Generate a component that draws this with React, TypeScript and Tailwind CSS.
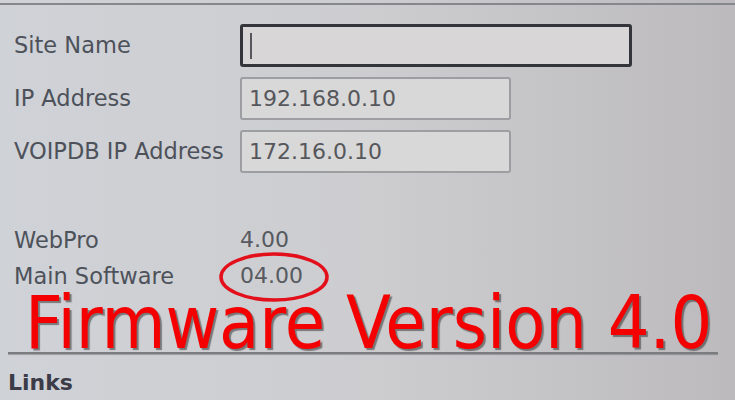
import React from "react";

const Field = ({ label, value, active }: { label: string; value?: string; active?: boolean }) => {
  return (
    <div className="flex flex-row items-center">
      <div className="w-[240px] pl-[14px] text-[22.5px] text-[#4d515a]">{label}</div>
      <div
        className={
          active
            ? "flex h-[43px] w-[392px] items-center rounded-[3px] border-[3px] border-[#34353a] bg-[#d8d6d6] pl-[7px]"
            : "flex h-[43px] w-[271px] items-center rounded-[3px] border-2 border-[#9d9ea2] bg-[#d9d8d8] pl-[7px] text-[22px] text-[#55575c]"
        }
      >
        {active ? <div className="h-[26px] w-[2px] bg-[#55575c]" /> : value}
      </div>
    </div>
  );
};

const App = () => {
  return (
    <div className="relative h-[400px] w-[735px] overflow-hidden bg-gradient-to-r from-[#cfd2d7] via-[#cdcdd0] to-[#bcbabc] pt-[3px] font-['DejaVu_Sans',sans-serif]">
      <div className="border-t-2 border-[#86878b]">
        {/* form */}
        <div className="flex flex-col gap-[10px] pt-[19px]">
          <Field label="Site Name" active />
          <Field label="IP Address" value="192.168.0.10" />
          <Field label="VOIPDB IP Address" value="172.16.0.10" />
        </div>

        {/* versions */}
        <div className="mt-[49px] flex flex-col text-[22.5px] leading-[36px]">
          <div className="flex flex-row">
            <div className="w-[240px] pl-[14px] text-[#4d515a]">WebPro</div>
            <div className="text-[22px] text-[#575a60]">4.00</div>
          </div>
          <div className="flex flex-row">
            <div className="w-[240px] pl-[14px] text-[#4d515a]">Main Software</div>
            <div className="text-[22px] text-[#575a60]">04.00</div>
          </div>
        </div>

        <div className="pl-[25px] font-['DejaVu_Sans_Condensed','DejaVu_Sans',sans-serif] text-[73px] leading-[58px] text-[#f40000] font-stretch-condensed [text-shadow:2px_2px_1px_rgba(60,60,60,0.6)]">
          Firmware Version 4.0
        </div>

        <div className="ml-[8px] h-[2px] w-[710px] bg-[#7b7c80] shadow-[0_1px_1px_rgba(0,0,0,0.25)]" />

        <div className="mt-[16px] pl-[8px] text-[22px] font-bold leading-[26px] text-[#3b3c48]">
          Links
        </div>
      </div>

      {/* red annotation circle */}
      <svg className="absolute left-[218px] top-[251px]" width="112" height="52" viewBox="0 0 112 52">
        <ellipse cx="56" cy="26" rx="53" ry="23" fill="none" stroke="#e3101c" strokeWidth="3.5" />
      </svg>
    </div>
  );
};

export default App;
